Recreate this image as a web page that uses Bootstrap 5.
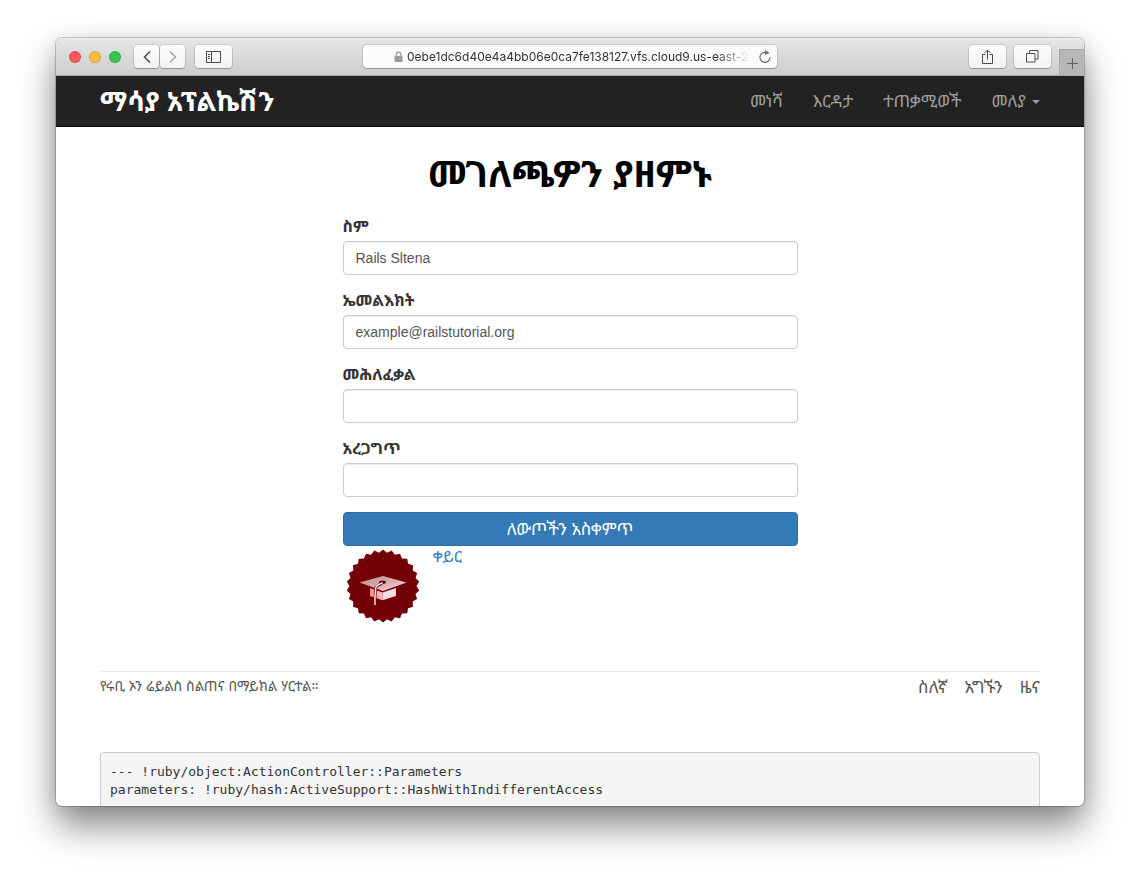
<!DOCTYPE html>
<html lang="am">
<head>
<meta charset="utf-8">
<meta name="viewport" content="width=device-width, initial-scale=1">
<title>ማሳያ አፕልኬሽን</title>
<link href="https://cdn.jsdelivr.net/npm/bootstrap@5.3.0/dist/css/bootstrap.min.css" rel="stylesheet">
<style>
  :root { --ethiopic: "Liberation Sans", "Noto Sans Ethiopic", "Noto Sans", sans-serif; }
  body { font-family: var(--ethiopic); font-size: 14px; line-height: 20px; color: #333; background: #fff; }
  a { color: #337ab7; text-decoration: none; }
  .desk { height: 100vh; min-height: 500px; padding: 38px 56px 74px; }
  .browser { border-radius: 6px; background: #fff; box-shadow: 0 0 0 1px rgba(0,0,0,.2), 0 20px 36px rgba(0,0,0,.46), 0 2px 20px rgba(0,0,0,.1); }

  .toolbar { height: 38px; background: linear-gradient(#e6e6e6, #cdcdcd); border-bottom: 1px solid #a9a9a9; box-shadow: inset 0 1px #f4f4f4; }
  .toolbar-side { flex: 1 1 0; }
  .lights { margin: 0 13px; }
  .light { width: 12px; height: 12px; border-radius: 50%; border: 1px solid rgba(0,0,0,.13); }
  .tool { height: 23px; padding: 0; border: 0; border-radius: 4px; background: linear-gradient(#fdfdfd, #f2f2f2); box-shadow: 0 0 0 1px rgba(0,0,0,.1), 0 1px 1px rgba(0,0,0,.22); color: #4c4c4c; }
  .tool svg { display: block; margin: auto; }
  .tool-narrow { width: 25px; }
  .tool-wide { width: 37px; }
  .tool-pair { gap: 1px; margin-right: 10px; }
  .address { width: 414px; height: 23px; border-radius: 4px; background: #fbfbfb; box-shadow: 0 0 0 1px rgba(0,0,0,.1), 0 1px 1px rgba(0,0,0,.22); padding: 0 5px 0 31px; }
  .address input { font: 12px/20px Inter, sans-serif; color: #333; border: 0; background: none; outline: 0; padding: 0; min-width: 0; -webkit-mask-image: linear-gradient(90deg, #000 90%, transparent); mask-image: linear-gradient(90deg, #000 90%, transparent); }
  .reload { border: 0; padding: 0; background: none; color: #6d6d6d; }
  .new-tab { width: 25px; height: 26px; padding: 0; border: 1px solid #a8a8a8; border-width: 1px 0 0 1px; background: #b7b7b7; color: #606060; }

  .page-gutter { padding-left: 44px; padding-right: 44px; }
  .site-nav { height: 51px; background: #222; border-bottom: 1px solid #080808; padding-top: 2px; padding-bottom: 0; }
  .site-nav .navbar-brand { color: #fff; font-size: 27px; line-height: 30px; font-weight: 700; padding: 0; margin: 0; }
  .site-nav .navbar-nav .nav-link { color: #9d9d9d; font-size: 17px; line-height: 20px; padding: 0; }
  .site-nav .navbar-nav { gap: 30px; }
  .site-nav .dropdown-toggle::after { border-width: 4px 4px 0; margin-left: 6px; vertical-align: 3px; }

  h1 { font-size: 37px; line-height: 48px; font-weight: 700; color: #000; text-align: center; margin: 24px 0 17px; }
  .form-row { --bs-gutter-x: 30px; }
  .form-label { display: block; font-size: 16px; line-height: 22px; font-weight: 700; margin-bottom: 3px; }
  .field { margin-bottom: 15px; }
  .form-control { height: 34px; padding: 6px 12px; font-size: 14px; line-height: 20px; color: #555; border: 1px solid #ccc; border-radius: 4px; box-shadow: inset 0 1px 1px rgba(0,0,0,.075); }
  .btn-save { height: 34px; padding: 7px 12px 5px; font-size: 17px; line-height: 20px; color: #fff; background: #337ab7; border: 1px solid #2e6da4; border-radius: 4px; }
  .change { font-size: 16px; line-height: 22px; margin-left: 10px; }

  footer { margin-top: 45px; padding-top: 5px; border-top: 1px solid #eaeaea; color: #555; }
  footer a { color: #555; font-size: 17px; line-height: 22px; }
  footer small { font-size: 14px; line-height: 18px; }
  .footer-links { gap: 17px; }
  .debug-dump { margin: 53px 0 0; padding: 10px 9px; font: 13px/18px "DejaVu Sans Mono", monospace; color: #333; background: #f5f5f5; border: 1px solid #ccc; border-radius: 4px; height: 100px; }
</style>
</head>
<body>
<div class="desk">
  <div class="browser h-100 overflow-hidden">
    <div class="toolbar d-flex align-items-center">
      <div class="toolbar-side d-flex align-items-center">
        <div class="lights d-flex gap-2">
          <span class="light" style="background:#fc5b57"></span>
          <span class="light" style="background:#fdbc40"></span>
          <span class="light" style="background:#34c84a"></span>
        </div>
        <div class="tool-pair d-flex">
          <button class="tool tool-narrow" type="button" aria-label="Back"><svg width="12" height="16" fill="none" stroke="currentColor" stroke-width="1.6"><path d="M9 2.5 3.5 8 9 13.5"/></svg></button>
          <button class="tool tool-narrow" type="button" aria-label="Forward"><svg width="12" height="16" fill="none" stroke="#a8a8a8" stroke-width="1.6"><path d="m3 2.5 5.500 5.500L3 13.500"/></svg></button>
        </div>
        <button class="tool tool-wide" type="button" aria-label="Sidebar"><svg width="15" height="12" fill="none" stroke="currentColor"><path d="M.5.5h14v11H.5zM5.500.5v11M2 3.500h2M2 5.500h2M2 7.500h2"/></svg></button>
      </div>
      <div class="address d-flex align-items-center">
        <svg width="9" height="12" class="flex-shrink-0 me-1"><path d="M2.200 6V3.400a2.300 2.300 0 0 1 4.600 0V6" fill="none" stroke="#999" stroke-width="1.200"/><rect x=".5" y="5" width="8" height="6" rx=".7" fill="#999"/></svg>
        <input class="flex-grow-1" type="text" aria-label="Address" value="0ebe1dc6d40e4a4bb06e0ca7fe138127.vfs.cloud9.us-east-2">
        <button class="reload d-flex ms-2" type="button" aria-label="Reload"><svg width="14" height="14" fill="none" stroke="currentColor" stroke-width="1.200"><path d="M10.500 3.700A5 5 0 1 0 12 7.300M7 2.500h2"/><path d="M7 0 11 2.500 7 5z" fill="currentColor" stroke="none"/></svg></button>
      </div>
      <div class="toolbar-side d-flex align-items-center justify-content-end align-self-stretch">
        <button class="tool tool-wide" type="button" aria-label="Share"><svg width="13" height="16" fill="none" stroke="currentColor"><path d="M4.500 5.500h-3v9h10v-9h-3M6.500 10.500v-9.500M3.500 4l3-3 3 3"/></svg></button>
        <button class="tool tool-wide ms-2 me-2" type="button" aria-label="Tabs"><svg width="13" height="13" fill="none" stroke="currentColor"><path d="M.5 3.500h8.500v8.500H.5zM3.500 3.500v-3h8.500v8.500h-3"/></svg></button>
        <button class="new-tab align-self-end" type="button" aria-label="New tab"><svg width="13" height="13" stroke="currentColor"><path d="M6.500 1v11M1 6.500h11"/></svg></button>
      </div>
    </div>

    <nav class="navbar navbar-expand site-nav page-gutter">
      <a class="navbar-brand" href="#">ማሳያ አፕልኬሽን</a>
      <ul class="navbar-nav ms-auto">
        <li class="nav-item"><a class="nav-link" href="#">መነሻ</a></li>
        <li class="nav-item"><a class="nav-link" href="#">እርዳታ</a></li>
        <li class="nav-item"><a class="nav-link" href="#">ተጠቃሚወች</a></li>
        <li class="nav-item dropdown"><a class="nav-link dropdown-toggle" href="#" data-bs-toggle="dropdown">መለያ</a></li>
      </ul>
    </nav>

    <div class="page-gutter">
      <h1>መገለጫዎን ያዘምኑ</h1>
      <div class="row form-row">
        <div class="col-6 offset-3">
          <form>
            <div class="field"><label class="form-label" for="name">ስም</label><input class="form-control" id="name" type="text" value="Rails Sltena"></div>
            <div class="field"><label class="form-label" for="email">ኤመልእክት</label><input class="form-control" id="email" type="email" value="example@railstutorial.org"></div>
            <div class="field"><label class="form-label" for="password">መሕለፈቃል</label><input class="form-control" id="password" type="password"></div>
            <div class="field"><label class="form-label" for="confirm">አረጋግጥ</label><input class="form-control" id="confirm" type="password"></div>
            <button class="btn btn-save w-100 d-block" type="submit">ለውጦችን አስቀምጥ</button>
          </form>
          <div class="d-flex align-items-start">
            <svg width="80" height="80" viewBox="0 0 80 80" role="img" aria-label="Gravatar">
              <defs>
                <linearGradient id="board" x1="0" x2="1" y1="0" y2="1"><stop offset="0" stop-color="#c08a90"/><stop offset=".5" stop-color="#d9a9ae"/><stop offset="1" stop-color="#f7e6e8"/></linearGradient>
                <linearGradient id="side"><stop offset="0" stop-color="#ee8a90"/><stop offset="1" stop-color="#f9bcc0"/></linearGradient>
              </defs>
              <polygon id="seal" fill="#730007"/>
              <path d="M16.500 36.500 40 30l23.500 6.500L40 45z" fill="url(#board)"/>
              <path d="M27 42l12.500 4.500v7.800L27 50z" fill="url(#side)"/>
              <path d="M39.500 46.500 53 42v8L39.500 54.300z" fill="#f3dcdd"/>
              <ellipse cx="39.500" cy="36.300" rx="3.500" ry="1.700" fill="#730007"/>
              <path d="M39 37.500q-5 2-6.200 4-1 7-.8 17.500" fill="none" stroke="#730007" stroke-width="2.800"/>
              <path d="M39.500 36.800q-5.500 2.200-6.700 4.700-1 7-.8 17.500" fill="none" stroke="#f7e4e5" stroke-width="1.500"/>
            </svg>
            <a class="change" href="#">ቀይር</a>
          </div>
        </div>
      </div>
      <footer class="d-flex justify-content-between align-items-start">
        <small>የሩቢ ኦን ሬይልስ ስልጠና በማይክል ሃርተል።</small>
        <nav class="footer-links d-flex"><a href="#">ስለኛ</a><a href="#">አግኙን</a><a href="#">ዜና</a></nav>
      </footer>
      <pre class="debug-dump">--- !ruby/object:ActionController::Parameters
parameters: !ruby/hash:ActiveSupport::HashWithIndifferentAccess</pre>
    </div>
  </div>
</div>
<script src="https://cdn.jsdelivr.net/npm/bootstrap@5.3.0/dist/js/bootstrap.bundle.min.js"></script>
<script>
  // Scalloped rim of the seal: 26 teeth around the centre
  const points = [];
  for (let i = 0; i < 52; i++) {
    const r = i % 2 ? 33.5 : 36.5, a = i * Math.PI / 26 - Math.PI / 2;
    points.push((40 + r * Math.cos(a)).toFixed(1) + ',' + (40 + r * Math.sin(a)).toFixed(1));
  }
  document.getElementById('seal').setAttribute('points', points.join(' '));
</script>
</body>
</html>
